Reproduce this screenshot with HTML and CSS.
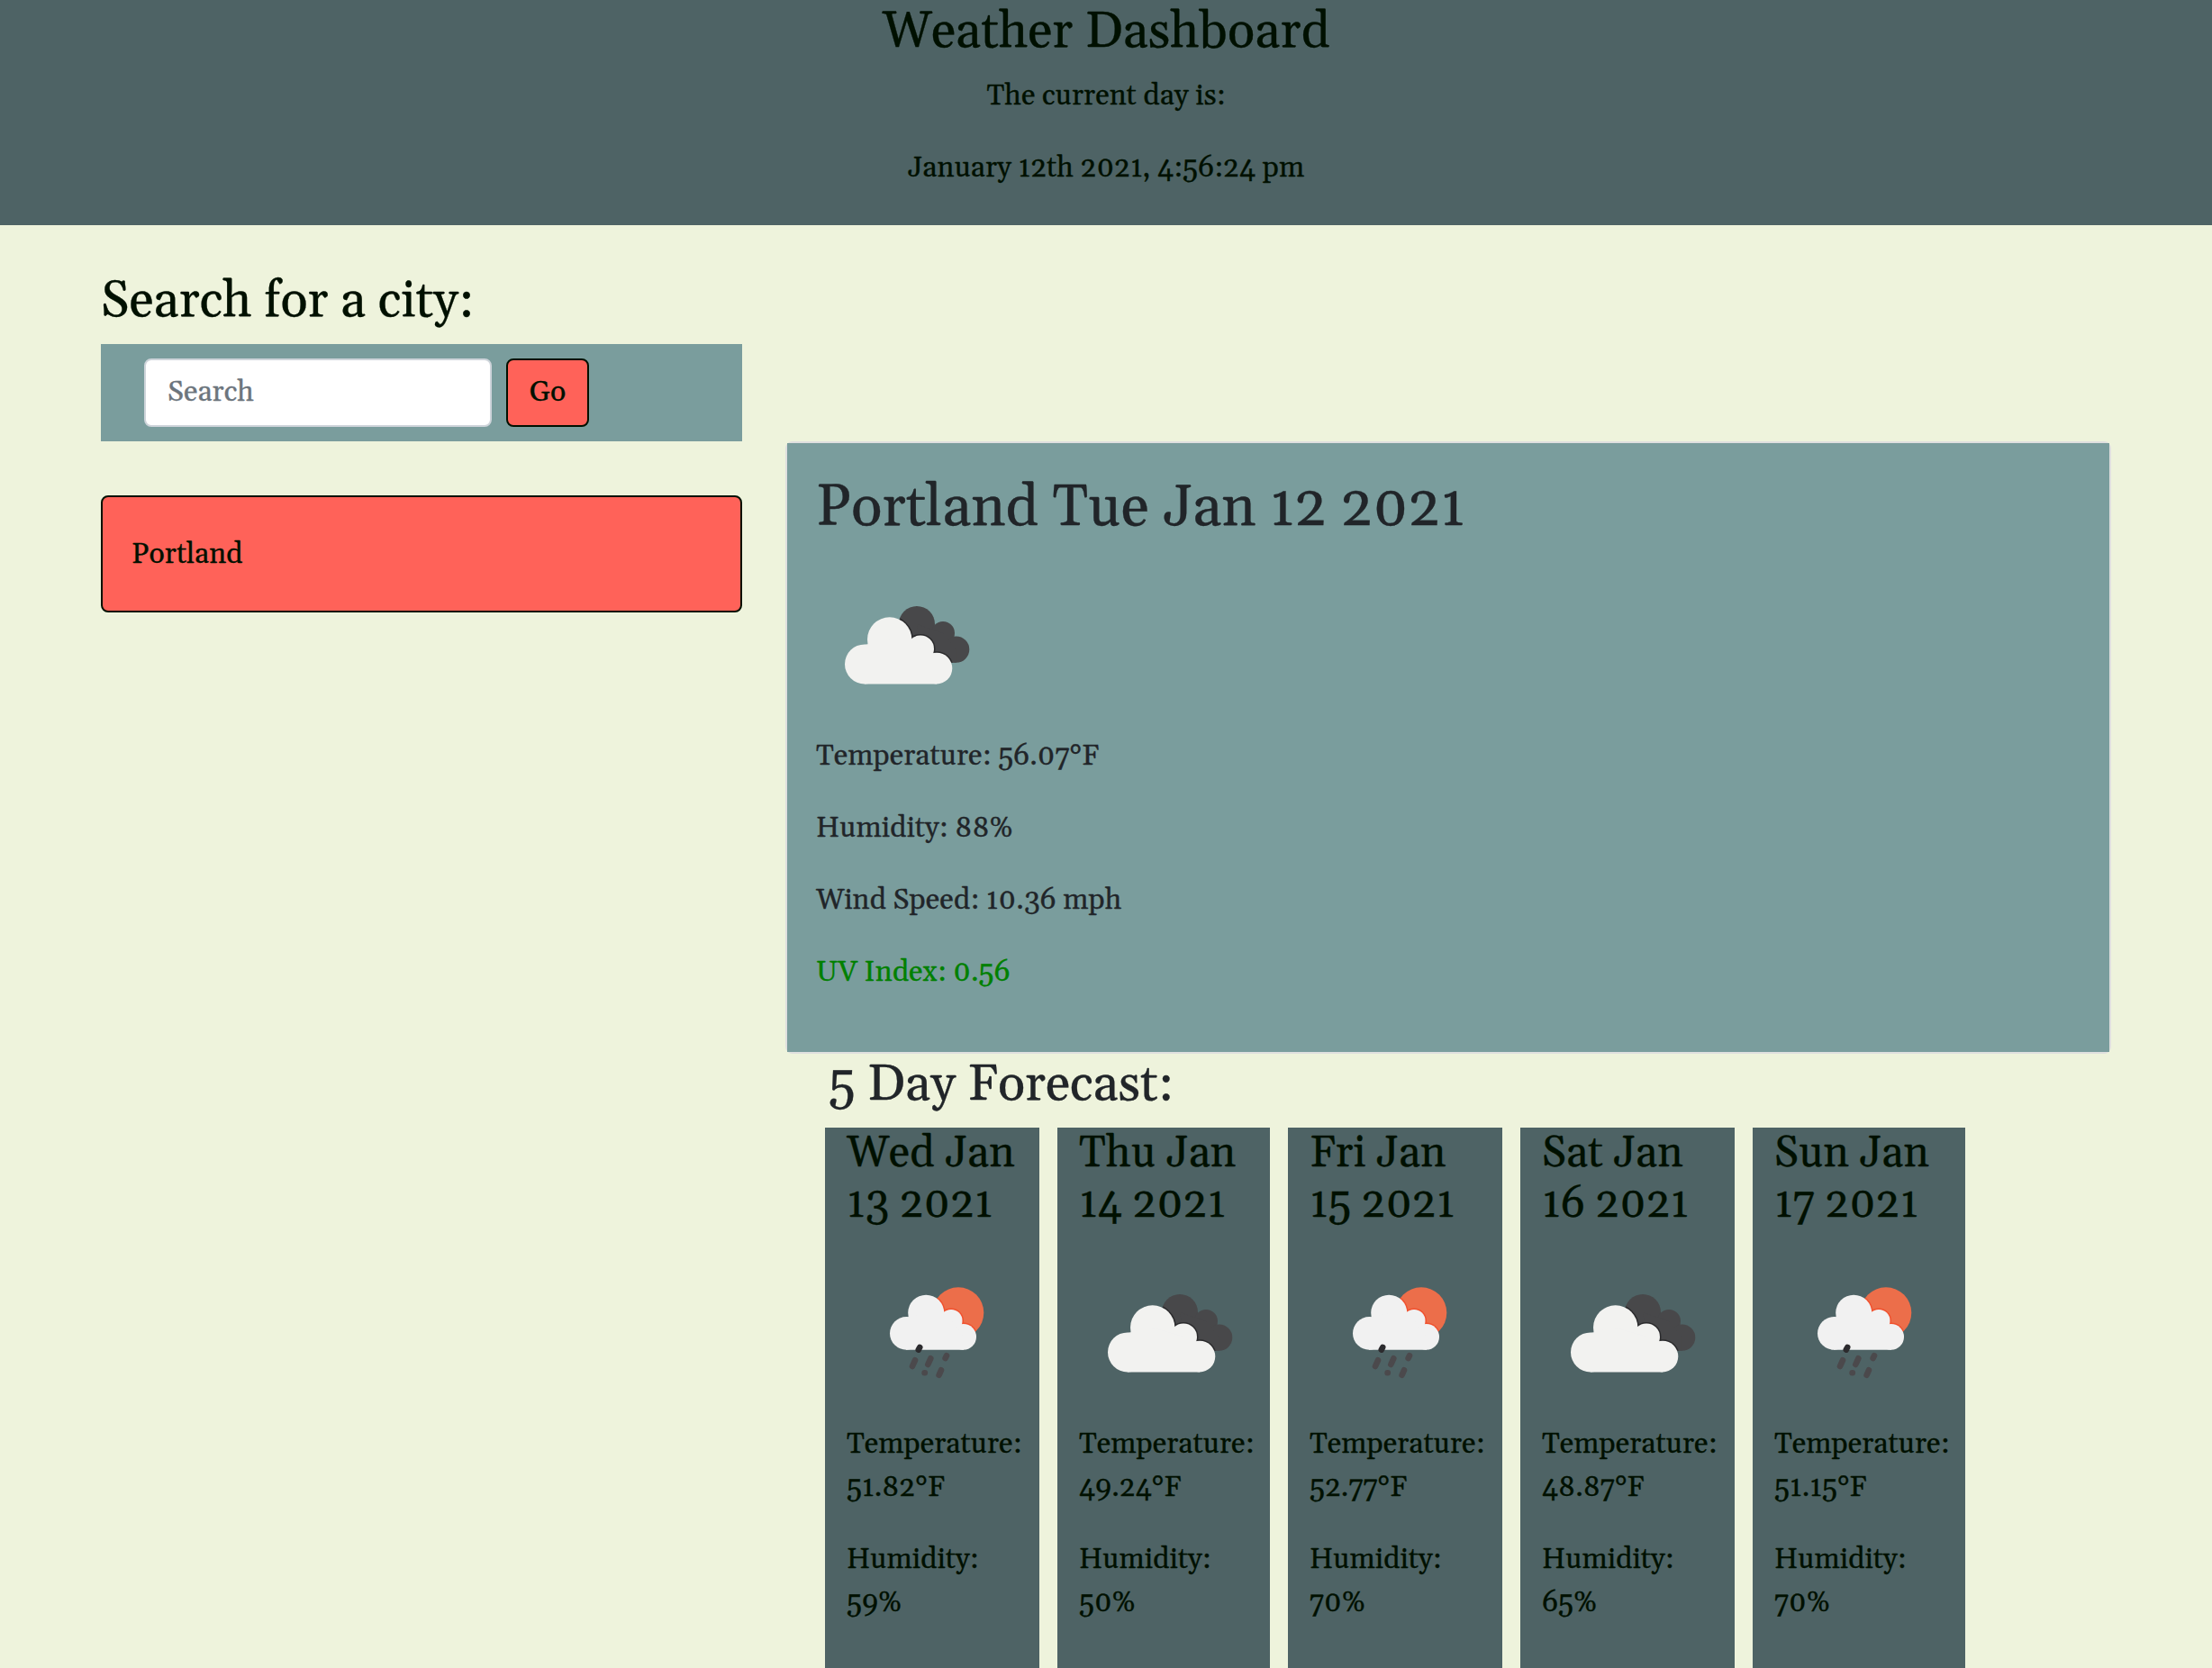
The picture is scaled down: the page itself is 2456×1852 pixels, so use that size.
FILE: index.html
```html
<!DOCTYPE html>
<html lang="en">
<head>
<meta charset="utf-8">
<title>Weather Dashboard</title>
<link rel="stylesheet" href="styles.css">
</head>
<body>
<svg class="sprites" aria-hidden="true">
  <defs>
    <g id="cloud-back">
      <circle cx="112" cy="77" r="20"/><circle cx="141" cy="87" r="13"/><circle cx="155.6" cy="105.1" r="14.7"/>
      <path d="M112 77 L141 87 L155.6 105 V119.8 H120 Z"/>
    </g>
    <g id="cloud-front">
      <circle cx="54" cy="121.4" r="22"/><circle cx="81.7" cy="94" r="24.7"/><circle cx="116" cy="104.4" r="15"/><circle cx="134" cy="126.1" r="17.3"/>
      <path d="M54 100 L81 94 L116 104 L134 126 V143.4 H54 Z"/>
    </g>
    <g id="rain-cloud">
      <circle cx="66.3" cy="100.4" r="18.3"/><circle cx="88.2" cy="77.7" r="20"/><circle cx="116" cy="86.4" r="12.5"/><circle cx="129.7" cy="104.4" r="14.3"/>
      <path d="M66 83 L88 78 L116 86 L130 104 V118.7 H66 Z"/>
    </g>
    <clipPath id="back-clip"><circle cx="112" cy="77" r="20"/><circle cx="141" cy="87" r="13"/><circle cx="155.6" cy="105.1" r="14.7"/><path d="M112 77 L141 87 L155.6 105 V119.8 H120 Z"/></clipPath>
    <clipPath id="sun-clip"><circle cx="124" cy="77.6" r="28.3"/></clipPath>
    <symbol id="icon-clouds" viewBox="0 0 200 200">
      <use href="#cloud-back" fill="#48484a"/>
      <g clip-path="url(#back-clip)"><use href="#cloud-front" fill="#2a2a2c" stroke="#2a2a2c" stroke-width="3"/></g>
      <use href="#cloud-front" fill="#f2f2f0"/>
    </symbol>
    <symbol id="icon-rain" viewBox="0 0 200 200">
      <circle cx="124" cy="77.6" r="28.3" fill="#ec6e4a"/>
      <g clip-path="url(#sun-clip)"><use href="#rain-cloud" fill="#f0512e" stroke="#f0512e" stroke-width="3"/></g>
      <use href="#rain-cloud" fill="#f1f1f1"/>
      <g stroke="#4b494c" stroke-width="6.6" stroke-linecap="round">
        <path d="M76 130.3 L73 137M93.3 128.3 L90.3 135M111 125.2 L109.6 128M86.6 144.2 L86.8 144.2M105 141.3 L102.6 146.8"/>
        <path d="M81.2 116 L79.8 118.6" stroke="#2c2b2e"/>
      </g>
    </symbol>
  </defs>
</svg>

<header class="header">
  <h1 class="header-title">Weather Dashboard</h1>
  <p>The current day is:</p>
  <p>January 12th 2021, 4:56:24 pm</p>
</header>

<main class="layout">
  <aside class="search">
    <h3 class="section-title">Search for a city:</h3>
    <form class="search-bar">
      <input class="search-input" type="search" placeholder="Search" aria-label="Search">
      <button class="search-button" type="button">Go</button>
    </form>
    <ul class="history"><li class="history-item">Portland</li></ul>
  </aside>

  <section class="results">
    <article class="card">
      <div class="card-body">
        <h2 class="card-title">Portland Tue Jan 12 2021</h2>
        <svg class="icon"><use href="#icon-clouds"/></svg>
        <p>Temperature: 56.07°F</p>
        <p>Humidity: 88%</p>
        <p>Wind Speed: 10.36 mph</p>
        <p class="uv-low">UV Index: 0.56</p>
      </div>
    </article>
    <div class="forecast">
      <h3 class="forecast-title">5 Day Forecast:</h3>
      <div class="days">
        <div class="day"><h4>Wed Jan 13 2021</h4><svg class="icon"><use href="#icon-rain"/></svg><p>Temperature: 51.82°F</p><p>Humidity: 59%</p></div>
        <div class="day"><h4>Thu Jan 14 2021</h4><svg class="icon"><use href="#icon-clouds"/></svg><p>Temperature: 49.24°F</p><p>Humidity: 50%</p></div>
        <div class="day"><h4>Fri Jan 15 2021</h4><svg class="icon"><use href="#icon-rain"/></svg><p>Temperature: 52.77°F</p><p>Humidity: 70%</p></div>
        <div class="day"><h4>Sat Jan 16 2021</h4><svg class="icon"><use href="#icon-clouds"/></svg><p>Temperature: 48.87°F</p><p>Humidity: 65%</p></div>
        <div class="day"><h4>Sun Jan 17 2021</h4><svg class="icon"><use href="#icon-rain"/></svg><p>Temperature: 51.15°F</p><p>Humidity: 70%</p></div>
      </div>
    </div>
  </section>
</main>
</body>
</html>
```
FILE: styles.css
```css
* { box-sizing: border-box; }

html, body { height: 100%; }

body {
  margin: 0;
  overflow: hidden;
  display: flex;
  flex-direction: column;
  background: #eef3dc;
  color: #212529;
  font: 32px/48px Georgia, Gelasio, "Liberation Serif", serif;
  -webkit-text-stroke: 0.3px currentColor;
}

h1, h2, h3, h4 { margin: 0; font-weight: 400; line-height: 1.2; }
p { margin: 0 0 32px; }

.sprites { position: absolute; width: 0; height: 0; }

.header {
  flex: none;
  height: 250px;
  padding-top: 2px;
  background: #4e6365;
  color: #001000;
  text-align: center;
}
.header-title { font-size: 56px; margin-bottom: 13.8px; }

.layout {
  flex: 1;
  min-height: 0;
  display: flex;
  align-items: flex-start;
  gap: 48px;
  padding: 48px 112px 0;
}

.search { width: 712px; flex: none; padding-top: 3px; color: #001000; }
.section-title { font-size: 56px; margin-bottom: 13.8px; }
.search-bar {
  display: flex;
  gap: 16px;
  padding: 16px 48px;
  background: #7a9d9d;
}
.search-input {
  width: 386px;
  height: 76px;
  padding: 12px 24px;
  border: 2px solid #ced4da;
  border-radius: 8px;
  background: #fff;
  font: inherit;
  appearance: none;
}
.search-input::placeholder { color: #6c757d; opacity: 1; }
.search-button {
  width: 92px;
  height: 76px;
  padding: 0;
  border: 2px solid #001000;
  border-radius: 8px;
  background: #ff6259;
  color: #001000;
  font: inherit;
}
.history { list-style: none; margin: 60px 0 0; padding: 0; }
.history-item {
  height: 130px;
  padding: 40px 32px;
  border: 2px solid #001000;
  border-radius: 8px;
  background: #ff6259;
}

.results { width: 1472px; flex: none; padding-top: 192px; }
.card {
  border: 2px solid #dfdfdf;
  border-radius: 8px;
  background: #dfdfdf;
}
.card-body { height: 676px; padding: 35px 32px 32px; background: #7a9d9d; }
.card-title { font-size: 64px; margin-bottom: 12.2px; }
.icon { display: block; width: 200px; height: 200px; flex: none; }
.uv-low { color: #008000; }

.forecast { padding-left: 44px; }
.forecast-title { font-size: 56px; padding: 1px 0 0 4px; margin-bottom: 13.8px; }
.days {
  display: grid;
  grid-template-columns: 238px 236px 238px 238px 236px;
  gap: 20px;
}
.day {
  height: 640px;
  padding: 0 24px;
  background: #4e6365;
  color: #001000;
}
.day h4 { font-size: 48px; line-height: 56px; width: 190px; padding-top: 1px; margin-bottom: 15.4px; }
.day p { width: 196px; }
```
